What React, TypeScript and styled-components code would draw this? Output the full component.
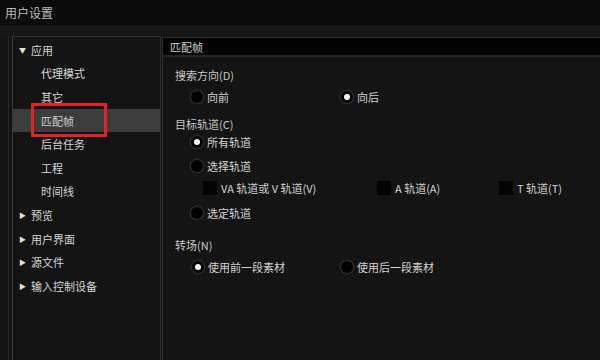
import React from "react";
import styled, { createGlobalStyle } from "styled-components";

const Global = createGlobalStyle`
  html, body { margin: 0; padding: 0; background: #141414; }
  body { font-family: "Noto Sans CJK SC", "Noto Sans", sans-serif; width: 600px; height: 360px; overflow: hidden; }
  * { box-sizing: border-box; }
`;

const Window = styled.div`
  width: 600px;
  height: 360px;
  display: flex;
  flex-direction: column;
  background: #141414;
  color: #d0d0d0;
  font-size: 11px;
`;

const TitleBar = styled.div`
  height: 26px;
  flex: none;
  background: #0b0b0b;
  color: #bdbdbd;
  font-size: 12px;
  padding-left: 5px;
  display: flex;
  align-items: center;
  border-bottom: 1px solid #181818;
`;

const Body = styled.div`
  flex: 1;
  display: flex;
  padding-top: 10px;
  background: linear-gradient(#181818 0, #161616 11px, #141414 11px);
`;

const SideOuter = styled.div`
  margin-left: 8px;
  border-left: 1px solid #262626;
  padding-left: 3px;
  width: 152px;
  display: flex;
`;

const Side = styled.div`
  flex: 1;
  border-top: 1px solid #333;
  border-left: 1px solid #383838;
  padding-top: 1px;
  display: flex;
  flex-direction: column;
`;

const Row = styled.div<{ $indent?: boolean; $selected?: boolean }>`
  height: 23.6px;
  display: flex;
  align-items: center;
  padding-left: ${(p) => (p.$indent ? "28px" : "6px")};
  background: ${(p) => (p.$selected ? "#3d3d3d" : "transparent")};
  color: ${(p) => (p.$selected ? "#cfcfcf" : "#d6d6d6")};
  position: relative;
`;

const Arrow = styled.span`
  width: 12px;
  font-size: 7px;
  color: #e0e0e0;
  display: inline-block;
`;

const Highlight = styled.div`
  position: absolute;
  left: 18px;
  top: -6px;
  width: 76px;
  height: 34px;
  border: 3px solid #e02424;
`;

const Divider = styled.div`
  width: 3px;
  border-left: 1px solid #2a2a2a;
  border-right: 1px solid #2e2e2e;
`;

const Main = styled.div`
  flex: 1;
  display: flex;
  flex-direction: column;
`;

const Header = styled.div`
  height: 20px;
  margin-top: 1px;
  background: #030303;
  border-top: 1px solid #2c2c2c;
  border-bottom: 2px solid #262626;
  color: #cfcfcf;
  display: flex;
  align-items: center;
  padding-left: 7px;
`;

const Content = styled.div`
  padding: 8px 0 0 12px;
  display: flex;
  flex-direction: column;
`;

const Label = styled.div<{ $gap?: number }>`
  height: 20px;
  display: flex;
  align-items: center;
  color: #c8c8c8;
  margin-top: ${(p) => p.$gap ?? 0}px;
`;

const OptRow = styled.div<{ $h?: number }>`
  height: ${(p) => p.$h ?? 24}px;
  display: flex;
  align-items: center;
`;

const Opt = styled.div<{ $w?: number; $pl?: number }>`
  display: flex;
  align-items: center;
  width: ${(p) => (p.$w ? `${p.$w}px` : "auto")};
  padding-left: ${(p) => p.$pl ?? 16}px;
  color: #d2d2d2;
  gap: 4px;
`;

const RadioCircle = styled.span<{ $on?: boolean }>`
  width: 12px;
  height: 12px;
  border-radius: 50%;
  background: #000;
  box-shadow: 0 0 0 1.5px #2a2a2a;
  display: flex;
  align-items: center;
  justify-content: center;
  &::after {
    content: "";
    width: 6px;
    height: 6px;
    border-radius: 50%;
    background: #f4f4f4;
    display: ${(p) => (p.$on ? "block" : "none")};
  }
`;

const Box = styled.span`
  width: 14px;
  height: 14px;
  background: #040404;
  display: inline-block;
`;

const Radio = ({ on, label, w, pl }: { on?: boolean; label: string; w?: number; pl?: number }) => (
  <Opt $w={w} $pl={pl}>
    <RadioCircle $on={on} />
    <span>{label}</span>
  </Opt>
);

const Check = ({ label, w, pl }: { label: string; w?: number; pl?: number }) => (
  <Opt $w={w} $pl={pl}>
    <Box />
    <span>{label}</span>
  </Opt>
);

export default function App() {
  return (
    <Window>
      <Global />
      <TitleBar>用户设置</TitleBar>
      <Body>
        <SideOuter>
          <Side>
            <Row><Arrow>▼</Arrow>应用</Row>
            <Row $indent>代理模式</Row>
            <Row $indent>其它</Row>
            <Row $indent $selected>匹配帧<Highlight /></Row>
            <Row $indent>后台任务</Row>
            <Row $indent>工程</Row>
            <Row $indent>时间线</Row>
            <Row><Arrow>▶</Arrow>预览</Row>
            <Row><Arrow>▶</Arrow>用户界面</Row>
            <Row><Arrow>▶</Arrow>源文件</Row>
            <Row><Arrow>▶</Arrow>输入控制设备</Row>
          </Side>
        </SideOuter>
        <Divider />
        <Main>
          <Header>匹配帧</Header>
          <Content>
            <Label>搜索方向(D)</Label>
            <OptRow>
              <Radio label="向前" w={166} />
              <Radio on label="向后" pl={0} />
            </OptRow>
            <Label $gap={5}>目标轨道(C)</Label>
            <OptRow $h={16}>
              <Radio on label="所有轨道" />
            </OptRow>
            <OptRow $h={32}>
              <Radio label="选择轨道" />
            </OptRow>
            <OptRow $h={12}>
              <Check label="VA 轨道或 V 轨道(V)" w={202} pl={28} />
              <Check label="A 轨道(A)" w={122} pl={0} />
              <Check label="T 轨道(T)" pl={0} />
            </OptRow>
            <OptRow $h={38}>
              <Radio label="选定轨道" />
            </OptRow>
            <Label $gap={3}>转场(N)</Label>
            <OptRow>
              <Radio on label="使用前一段素材" w={166} pl={17} />
              <Radio label="使用后一段素材" pl={0} />
            </OptRow>
          </Content>
        </Main>
      </Body>
    </Window>
  );
}
